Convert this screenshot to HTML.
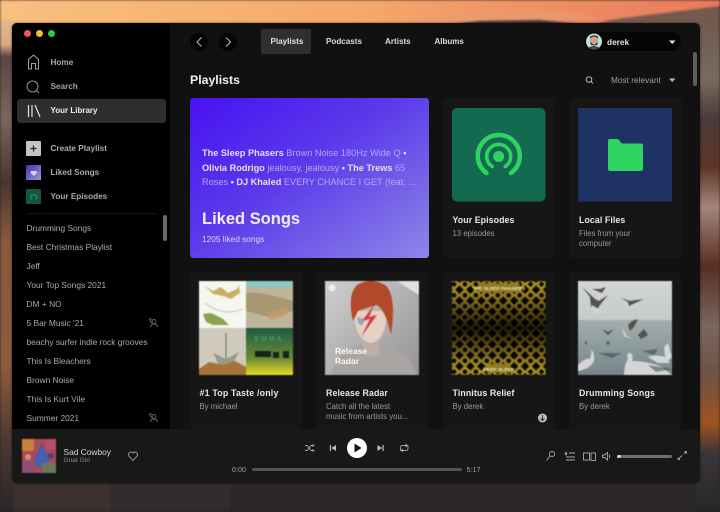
<!DOCTYPE html>
<html><head><meta charset="utf-8"><style>
html,body{margin:0;padding:0;width:720px;height:512px;overflow:hidden;background:#222}
*{box-sizing:border-box}
body{font-family:"Liberation Sans",sans-serif;position:relative}
.t{position:absolute;white-space:nowrap;line-height:12px;height:12px;transform:translateY(-6px)}
.s{font-size:8.4px;color:#aaa}
.b{font-weight:bold}
.a{position:absolute}
.card{position:absolute;background:#161616;border-radius:3px;width:112px}
svg{position:absolute;overflow:visible}
.art{filter:blur(.45px)}
</style></head><body>
<svg class="a" style="left:0;top:0;filter:blur(1px)" width="720" height="512" viewBox="0 0 720 512">
<defs>
<linearGradient id="sky" x1="0" y1="0" x2="1" y2="0"><stop offset="0" stop-color="#f8c080"/><stop offset=".5" stop-color="#f5a86c"/><stop offset="1" stop-color="#e8795c"/></linearGradient>
<linearGradient id="lf" x1="0" y1="0" x2="0" y2="1"><stop offset="0" stop-color="#e8b98c"/><stop offset=".05" stop-color="#d8a884"/><stop offset=".075" stop-color="#5a4644"/><stop offset=".2" stop-color="#7a655e"/><stop offset=".33" stop-color="#4a3530"/><stop offset=".45" stop-color="#8a5a3c"/><stop offset=".7" stop-color="#8d5c3e"/><stop offset=".85" stop-color="#4d3a34"/><stop offset="1" stop-color="#2a2628"/></linearGradient>
<linearGradient id="rt" x1="0" y1="0" x2="0" y2="1"><stop offset="0" stop-color="#6d5a52"/><stop offset=".12" stop-color="#7a6a60"/><stop offset=".2" stop-color="#4a3a3a"/><stop offset=".3" stop-color="#5f3526"/><stop offset=".38" stop-color="#a5867a"/><stop offset=".5" stop-color="#5a2e22"/><stop offset=".62" stop-color="#7a6660"/><stop offset=".72" stop-color="#6f5246"/><stop offset=".82" stop-color="#a0521f"/><stop offset=".88" stop-color="#3c3638"/><stop offset="1" stop-color="#262628"/></linearGradient>
</defs>
<rect width="720" height="512" fill="#2b2729"/>
<rect x="0" y="484" width="110" height="28" fill="#4a3a34" opacity=".55"/>
<rect x="110" y="484" width="120" height="28" fill="#3a3230" opacity=".5"/>
<rect width="720" height="26" fill="url(#sky)"/>
<rect x="0" y="20" width="14" height="492" fill="url(#lf)"/>
<rect x="696" y="20" width="24" height="492" fill="url(#rt)"/>
<path d="M590 26L610 20 640 16 680 11 720 6V30H590Z" fill="#75594f"/>
<path d="M400 22L450 15 500 9 560 12 600 18 500 23Z" fill="#e99a72" opacity=".7"/>
<path d="M450 24L480 21 540 20 580 24Z" fill="#3a3230"/>
</svg>
<svg class="a" style="left:0;top:0" width="720" height="512">
<defs>
<pattern id="dm" width="11" height="11" patternUnits="userSpaceOnUse" x="2" y="3"><rect width="11" height="11" fill="#a68a20"/><path d="M5.500 1.200L9.800 5.500 5.500 9.800 1.200 5.500Z" fill="#0a0804"/><circle cx="0" cy="0" r="2.300" fill="#0a0804"/><circle cx="11" cy="0" r="2.300" fill="#0a0804"/><circle cx="0" cy="11" r="2.300" fill="#0a0804"/><circle cx="11" cy="11" r="2.300" fill="#0a0804"/></pattern>
<linearGradient id="dmo" x1="0" y1="0" x2="0" y2="1"><stop offset=".1" stop-color="#000" stop-opacity="0"/><stop offset=".5" stop-color="#000" stop-opacity=".82"/><stop offset=".9" stop-color="#000" stop-opacity="0"/></linearGradient>
<linearGradient id="gs" x1="0" y1="0" x2="0" y2="1"><stop offset="0" stop-color="#d2d6d6"/><stop offset=".41" stop-color="#c6caca"/><stop offset=".42" stop-color="#a3adad"/><stop offset="1" stop-color="#75868a"/></linearGradient>
<linearGradient id="rr" x1="0" y1="0" x2="1" y2="1"><stop offset="0" stop-color="#cfcfcf"/><stop offset="1" stop-color="#949494"/></linearGradient>
<linearGradient id="g4" x1="0" y1="0" x2="0" y2="1"><stop offset="0" stop-color="#1f5a45"/><stop offset=".65" stop-color="#6c8a35"/><stop offset="1" stop-color="#e6dc20"/></linearGradient>
</defs>
</svg>

<div class="a" style="left:12px;top:23px;width:688px;height:460px;background:#111;border-radius:5px;overflow:hidden;box-shadow:0 0 2px rgba(0,0,0,.6)">
<div class="a" style="left:0;top:0;width:158px;height:406px;background:#000"></div>
<div class="a" style="left:0;top:406px;width:688px;height:54px;background:#181818"></div>
</div>

<!-- traffic lights -->
<div class="a" style="left:24px;top:30px;width:7px;height:7px;border-radius:50%;background:#f0575a"></div>
<div class="a" style="left:36px;top:30px;width:7px;height:7px;border-radius:50%;background:#f1bc2e"></div>
<div class="a" style="left:48px;top:30px;width:7px;height:7px;border-radius:50%;background:#2dc848"></div>

<div class="a" style="left:17px;top:99px;width:149px;height:24px;background:#2e2e2e;border-radius:3px"></div>
<svg style="left:0;top:0" width="170" height="210">
<path d="M28.500 69V59.500L33.500 55 38.500 59.500V69H35.500V63.500H31.500V69Z" fill="none" stroke="#a0a0a0" stroke-width="1"/>
<circle cx="32.500" cy="86.500" r="5.500" fill="none" stroke="#909090" stroke-width="1"/><path d="M36.500 90.500L39 93" stroke="#909090" stroke-width="1"/>
<path d="M28.500 105V117M32 105V117M35 105L40 117" fill="none" stroke="#e0e0e0" stroke-width="1.200"/>
</svg>
<div class="t b" style="left:50.500px;top:63px;font-size:8.200px;color:#aaa">Home</div>
<div class="t b" style="left:50.500px;top:87px;font-size:8.200px;color:#a4a4a4">Search</div>
<div class="t b" style="left:50.500px;top:111px;font-size:8px;color:#eee">Your Library</div>

<div class="a" style="left:26px;top:141px;width:15px;height:15px;background:#c4c4c4;border-radius:1px"></div>
<svg style="left:0;top:0" width="60" height="210"><path d="M33.500 145.500V151.500M30.500 148.500H36.500" stroke="#222" stroke-width="1.200"/></svg>
<div class="a" style="left:26px;top:165px;width:15px;height:15px;background:linear-gradient(135deg,#4a2bb0,#9b9bd0)"></div>
<svg style="left:0;top:0" width="60" height="210"><path d="M31 171H36.500L37 173 33.800 176 30.500 173Z" fill="#d8d0ee"/></svg>
<div class="a" style="left:26px;top:189px;width:15px;height:15px;background:#13573f;border-radius:1px"></div>
<svg style="left:0;top:0" width="60" height="210"><path d="M31.500 199.500A3 3 0 1 1 36 199.500" fill="none" stroke="#23a455" stroke-width="1"/></svg>
<div class="t b" style="left:50.500px;top:149px;font-size:8.200px;color:#aaa">Create Playlist</div>
<div class="t b" style="left:50.500px;top:173px;font-size:8.200px;color:#aaa">Liked Songs</div>
<div class="t b" style="left:50.500px;top:197px;font-size:8.200px;color:#aaa">Your Episodes</div>
<div class="a" style="left:27px;top:212.500px;width:130px;height:1px;background:#161616"></div>

<div class="t s" style="left:26.500px;top:228px">Drumming Songs</div>
<div class="t s" style="left:26.500px;top:247px">Best Christmas Playlist</div>
<div class="t s" style="left:26.500px;top:266px">Jeff</div>
<div class="t s" style="left:26.500px;top:285px">Your Top Songs 2021</div>
<div class="t s" style="left:26.500px;top:304px">DM + NO</div>
<div class="t s" style="left:26.500px;top:323px">5 Bar Music '21</div>
<div class="t s" style="left:26.500px;top:342px">beachy surfer indie rock grooves</div>
<div class="t s" style="left:26.500px;top:361px">This Is Bleachers</div>
<div class="t s" style="left:26.500px;top:380px">Brown Noise</div>
<div class="t s" style="left:26.500px;top:399px">This Is Kurt Vile</div>
<div class="t s" style="left:26.500px;top:418px">Summer 2021</div>
<svg style="left:0;top:0" width="170" height="430">
<g fill="none" stroke="#7a7a7a" stroke-width=".8"><circle cx="154" cy="321.500" r="2"/><path d="M150.500 327C151 324.500 152 324 154 324S157 324.500 157.500 327M152 319H149.500L151.500 323"/></g>
<g fill="none" stroke="#7a7a7a" stroke-width=".8"><circle cx="154" cy="416.500" r="2"/><path d="M150.500 422C151 419.500 152 419 154 419S157 419.500 157.500 422M152 414H149.500L151.500 418"/></g>
</svg>
<div class="a" style="left:163px;top:215px;width:4px;height:26px;background:#6a6a6a;border-radius:2px"></div>

<!-- top bar -->
<div class="a" style="left:190px;top:33px;width:18px;height:18px;border-radius:50%;background:#050505"></div>
<div class="a" style="left:219px;top:33px;width:18px;height:18px;border-radius:50%;background:#050505"></div>
<svg style="left:0;top:0" width="260" height="60" fill="none" stroke="#b5b5b5" stroke-width="1.100"><path d="M201.500 37.500L197 42 201.500 46.500"/><path d="M226 37.500L230.500 42 226 46.500"/></svg>
<div class="a" style="left:261px;top:29px;width:50px;height:25px;background:#2f2f2f;border-radius:2px"></div>
<div class="t b" style="left:270.500px;top:42px;font-size:8.100px;color:#e0e0e0">Playlists</div>
<div class="t b" style="left:326px;top:42px;font-size:8.100px;color:#ddd">Podcasts</div>
<div class="t b" style="left:385px;top:42px;font-size:8.100px;color:#ddd">Artists</div>
<div class="t b" style="left:434.500px;top:42px;font-size:8px;color:#ddd">Albums</div>

<div class="a" style="left:585px;top:32px;width:96px;height:19px;background:#050505;border-radius:10px"></div>
<svg style="left:0;top:0" width="720" height="100">
<circle cx="594" cy="41.500" r="8" fill="#b9dfe6"/><circle cx="594" cy="40" r="4" fill="#d2a27e"/><path d="M590 38.500Q594 34.500 598 38.500V36.500Q594 34 590 36.500Z" fill="#3a2a20"/><path d="M590.500 41.500Q594 47.500 597.500 41.500V44.500Q594 46.500 590.500 44.500Z" fill="#3a2a20"/><path d="M588 48Q594 44 600 48 597 49.500 594 49.500T588 48Z" fill="#4a4a48"/>
<path d="M669 40.500H675.500L672.250 44Z" fill="#e0e0e0"/>
<circle cx="589" cy="79.500" r="2.800" fill="none" stroke="#b8b8b8" stroke-width="1"/><path d="M591 81.500L593 83.500" stroke="#b8b8b8" stroke-width="1"/>
<path d="M669 78.500H675.500L672.250 82Z" fill="#b8b8b8"/>
</svg>
<div class="t b" style="left:607px;top:42px;font-size:8.300px;color:#e0e0e0">derek</div>
<div class="t" style="left:611px;top:80px;font-size:8.300px;color:#a0a0a0">Most relevant</div>
<div class="t b" style="left:190px;top:80px;font-size:12.300px;color:#f0f0f0;height:18px;line-height:18px;transform:translateY(-9px)">Playlists</div>
<div class="a" style="left:693px;top:52px;width:4px;height:34px;background:#5e5e5e;border-radius:2px"></div>

<!-- liked -->
<div class="a" style="left:190px;top:98px;width:239px;height:160px;border-radius:3px;background:linear-gradient(145deg,#4812f2 0%,#5b3aea 45%,#8e86e8 100%)"></div>
<div class="t" style="left:202px;top:153px;font-size:9.200px;color:#b5a8f5"><b style="color:#e4dffb">The Sleep Phasers</b> Brown Noise 180Hz Wide Q <b style="color:#e4dffb">•</b></div>
<div class="t" style="left:202px;top:167.500px;font-size:9.200px;color:#b5a8f5"><b style="color:#e4dffb">Olivia Rodrigo</b> jealousy, jealousy <b style="color:#e4dffb">• The Trews</b> 65</div>
<div class="t" style="left:202px;top:182px;font-size:9.200px;color:#b5a8f5">Roses <b style="color:#e4dffb">• DJ Khaled</b> EVERY CHANCE I GET (feat. ...</div>
<div class="t b" style="left:202px;top:219px;font-size:16.500px;color:#f0eefc;height:22px;line-height:22px;transform:translateY(-11px)">Liked Songs</div>
<div class="t" style="left:202px;top:239px;font-size:8.300px;color:#dcd8f8">1205 liked songs</div>

<!-- cards -->
<div class="card" style="left:443px;top:98px;height:160px"></div>
<div class="card" style="left:570px;top:98px;height:160px"></div>
<div class="card" style="left:190px;top:272px;height:157px"></div>
<div class="card" style="left:316px;top:272px;height:157px"></div>
<div class="card" style="left:443px;top:272px;height:157px"></div>
<div class="card" style="left:569px;top:272px;height:157px"></div>

<svg style="left:0;top:0" width="720" height="430">
<rect x="452" y="108" width="93.500" height="93.500" rx="5" fill="#136a50"/>
<g fill="none" stroke="#2fd35f" stroke-linecap="round">
<path d="M486.500 173A21 21 0 1 1 511 173" stroke-width="4.500"/>
<path d="M492.200 166.500A12 12 0 1 1 505.200 166.500" stroke-width="3.500"/>
</g>
<circle cx="498.700" cy="156.500" r="5.500" fill="#2fd35f"/>
<rect x="578" y="108" width="94" height="93.500" fill="#1e3264"/>
<path d="M608 141Q608 139 610 139H618L622 143.500H641Q643 143.500 643 145.500V169Q643 171 641 171H610Q608 171 608 169Z" fill="#2fd35f"/>
</svg>

<div class="t b" style="left:452.500px;top:220px;font-size:8.800px;letter-spacing:.08px;color:#e8e8e8">Your Episodes</div>
<div class="t" style="left:452.500px;top:234px;font-size:7.800px;color:#999">13 episodes</div>
<div class="t b" style="left:579px;top:220px;font-size:8.800px;letter-spacing:.08px;color:#e8e8e8">Local Files</div>
<div class="t" style="left:579px;top:234px;font-size:7.800px;color:#999">Files from your</div>
<div class="t" style="left:579px;top:244px;font-size:7.800px;color:#999">computer</div>

<!-- album art -->
<svg class="art" style="left:199px;top:281px" width="94" height="94" viewBox="0 0 94 94">
<rect width="47" height="47" fill="#f6f6f0"/><rect x="47" width="47" height="47" fill="#bdb59c"/><rect x="47" width="47" height="6" fill="#8cc8c4"/><rect y="47" width="47" height="47" fill="#cfcabc"/><rect x="47" y="47" width="47" height="47" fill="url(#g4)"/>
<path d="M6 5L14 10 22 6 29 12 38 8 40 4 41 12 32 18 24 15 14 13Z" fill="#c9b060"/><path d="M4 33L12 32 24 38 30 44 14 44 7 41Z" fill="#8aa44e"/><path d="M6 22Q24 36 44 28" stroke="#bbb" fill="none" stroke-width=".8"/>
<path d="M47 12Q60 10 94 20V30L70 36 47 30Z" fill="#a08a60" opacity=".7"/><path d="M68 32L90 26 88 33 72 40Z" fill="#c89a70" opacity=".8"/>
<path d="M14 72L27 78 40 71 33 84 20 84Z" fill="#9a9a8c"/><path d="M27 52V78" stroke="#6a6a5c"/><path d="M0 94V88L10 81 24 84 36 80 47 86V94Z" fill="#a57438"/>
<path d="M56 70H72V76H56ZM74 71H80V77H74ZM84 70H90V77H84Z" fill="#16251a"/>
<text x="70" y="60" font-size="7" font-family="Liberation Sans,sans-serif" font-weight="bold" fill="#3aa060" text-anchor="middle" letter-spacing="2">EMMA</text>
</svg>

<svg class="art" style="left:325px;top:281px" width="94" height="94" viewBox="0 0 94 94">
<rect width="94" height="94" fill="url(#rr)"/><path d="M72 0L94 14V0Z" fill="#e2e2e2"/>
<circle cx="7" cy="7" r="3.500" fill="#eee"/>
<path d="M6 94Q12 70 34 64H60Q84 70 92 94Z" fill="#aaa4a2"/>
<path d="M38 55H54V72Q46 80 38 72Z" fill="#bbaea6"/>
<path d="M29 30Q30 60 46 62 61 60 62 30Z" fill="#e6d0c2"/>
<path d="M28 40Q22 14 32 4 46 -4 60 4 72 14 66 54 61 30 52 24 38 28 33 30 32 50Z" fill="#b2492a"/>
<path d="M49 24L37 40 45 38 36 56 52 34 44 36Z" fill="#d83a40"/>
<path d="M32 36L40 38 37 45 33 42Z" fill="#6a8ab0" opacity=".6"/>
</svg>
<div class="t b" style="left:335px;top:351px;font-size:8.500px;color:#fafafa">Release</div>
<div class="t b" style="left:335px;top:361px;font-size:8.500px;color:#fafafa">Radar</div>

<svg class="art" style="left:452px;top:281px" width="93.500" height="94" viewBox="0 0 94 94">
<rect width="94" height="94" fill="url(#dm)"/><rect width="94" height="94" fill="url(#dmo)"/>
<rect x="27" y="2" width="41" height="9" fill="#8e7a20"/><rect x="35" y="83" width="24" height="9" fill="#8e7a20"/>
<text x="47" y="9" font-family="Liberation Sans,sans-serif" font-size="5" font-weight="bold" fill="#f2ecc0" text-anchor="middle">THE SLEEP PHASERS</text>
<text x="47" y="90" font-family="Liberation Sans,sans-serif" font-size="5" font-weight="bold" fill="#f2ecc0" text-anchor="middle">DEEP SLEEP</text>
</svg>

<svg class="art" style="left:578px;top:281px" width="94" height="94" viewBox="0 0 94 94">
<rect width="94" height="94" fill="url(#gs)"/>
<g fill="#55514e"><path d="M4 6L12 16 13 26 18 30 22 24 30 14 21 20 17 18Z"/><path d="M14 8L24 12 28 6 22 8Z"/><path d="M43 17L52 20 66 18 55 23 51 25 50 21Z"/><path d="M50 44L54 40 60 38 56 46 52 50Z"/><path d="M24 48L30 54 36 48 30 51Z"/><path d="M60 54L66 48 70 54 63 58Z"/></g>
<g fill="#d4d6d4"><path d="M14 24L24 30 20 33 13 28Z"/><path d="M44 46L48 54 54 58 46 55Z"/><path d="M0 84Q8 76 12 78 14 70 13 68 17 72 16 80 12 88 0 90Z"/><path d="M46 94Q46 84 50 78 48 72 52 72 56 74 54 80 70 80 84 86L94 94Z"/><path d="M70 76Q76 73 88 76L92 82 80 82Z"/><path d="M90 62L86 66 88 82 94 76Z"/></g>
<g fill="#3a4448" opacity=".55"><path d="M20 72H44L34 77ZM64 70L80 68 76 74ZM70 84L94 88 78 91Z"/><circle cx="30" cy="62" r="2"/><circle cx="8" cy="62" r="1.500"/></g>
</svg>

<div class="t b" style="left:199.500px;top:393px;font-size:8.800px;letter-spacing:.2px;color:#e8e8e8">#1 Top Taste /only</div>
<div class="t" style="left:199.500px;top:407px;font-size:7.800px;color:#999">By michael</div>
<div class="t b" style="left:326px;top:393px;font-size:8.800px;letter-spacing:.1px;color:#e8e8e8">Release Radar</div>
<div class="t" style="left:326px;top:407px;font-size:7.800px;color:#999">Catch all the latest</div>
<div class="t" style="left:326px;top:417px;font-size:7.800px;color:#999">music from artists you...</div>
<div class="t b" style="left:452.500px;top:393px;font-size:8.800px;letter-spacing:.1px;color:#e8e8e8">Tinnitus Relief</div>
<div class="t" style="left:452.500px;top:407px;font-size:7.800px;color:#999">By derek</div>
<div class="t b" style="left:579px;top:393px;font-size:8.800px;letter-spacing:.2px;color:#e8e8e8">Drumming Songs</div>
<div class="t" style="left:579px;top:407px;font-size:7.800px;color:#999">By derek</div>
<svg style="left:0;top:0" width="720" height="430"><circle cx="542.500" cy="418" r="4.500" fill="#bdbdbd"/><path d="M542.500 415V420M540.500 418.500L542.500 420.500 544.500 418.500" stroke="#222" stroke-width=".9" fill="none"/></svg>

<!-- player -->
<svg class="art" style="left:22px;top:439px" width="34" height="34" viewBox="0 0 34 34">
<rect width="34" height="34" fill="#a84a58"/><rect x="0" y="0" width="12" height="12" fill="#c9803c"/><path d="M12 20L20 4 27 20 26 28H14Z" fill="#4a5eb0"/><rect x="24" y="0" width="10" height="10" fill="#b8506a"/><rect x="0" y="22" width="12" height="12" fill="#8d5070"/><rect x="20" y="24" width="14" height="10" fill="#6a7a58"/><circle cx="6" cy="18" r="3" fill="#d88a7a"/><circle cx="29" cy="17" r="3" fill="#5a3a80"/></svg>
<div class="t" style="left:63.500px;top:451.500px;font-size:8.400px;color:#d8d8d8">Sad Cowboy</div>
<div class="t" style="left:63.500px;top:461px;font-size:6.600px;color:#8c8c8c">Goat Girl</div>
<div class="t" style="left:232px;top:469.500px;font-size:7.200px;color:#a0a0a0">0:00</div>
<div class="t" style="left:466.500px;top:469.500px;font-size:7.200px;color:#a0a0a0">5:17</div>
<div class="a" style="left:252px;top:468px;width:210px;height:2.500px;background:#535353;border-radius:2px"></div>
<div class="a" style="left:617px;top:455px;width:55px;height:2.500px;background:#6e6e6e;border-radius:2px"></div>
<div class="a" style="left:617px;top:454.500px;width:3.500px;height:3.500px;background:#d0d0d0;border-radius:50%"></div>
<svg style="left:0;top:430px" width="720" height="60" viewBox="0 430 720 60" fill="none" stroke="#a8a8a8" stroke-width=".9">
<path d="M133 460.500L129.300 456.500Q127.800 454.500 129.300 452.800 131.300 451 133 453 134.700 451 136.700 452.800 138.200 454.500 136.700 456.500Z"/>
<path d="M305 445.500H307L311 450.500H313.500M305 450.500H307L311 445.500H313.500M312.500 444.500L314 445.500 312.500 446.500M312.500 449.500L314 450.500 312.500 451.500" stroke="#a5a5a5"/>
<path d="M330.500 445V451" stroke="#c0c0c0" stroke-width="1.200"/><path d="M336 445V451L331.500 448Z" fill="#c0c0c0" stroke="none"/>
<path d="M383 445V451" stroke="#c0c0c0" stroke-width="1.200"/><path d="M377.500 445V451L382 448Z" fill="#c0c0c0" stroke="none"/>
<path d="M400.500 450.500V447.500Q400.500 445.500 402.500 445.500H407M405.500 444L407.500 445.500 405.500 447M408 445.500V448.500Q408 450.500 406 450.500H401.500M403 449L401 450.500 403 452" stroke="#a5a5a5"/>
<circle cx="552" cy="454" r="2.600"/><path d="M550 456L546.500 460.500"/>
<path d="M566 453.500V455.500M569 453H575M566 457H575M566 460H575"/><circle cx="566" cy="453.500" r=".8" fill="#a8a8a8"/>
<rect x="583.500" y="453" width="6" height="7"/><rect x="591" y="453" width="4.500" height="7.500"/>
<path d="M602.500 455H604.500L607.500 452.500V460L604.500 457.500H602.500ZM609 454.500Q610.500 456.250 609 458"/>
<path d="M678 459.500L682 455.500M684 454L686.500 451.500M678 459.500V457.500M678 459.500H680M686.500 451.500V453.500M686.500 451.500H684.500"/>
</svg>
<svg style="left:0;top:430px" width="720" height="60" viewBox="0 430 720 60"><circle cx="357" cy="448" r="10" fill="#fff"/><path d="M354.500 443.500V452.500L361.500 448Z" fill="#111"/></svg>
</body></html>
